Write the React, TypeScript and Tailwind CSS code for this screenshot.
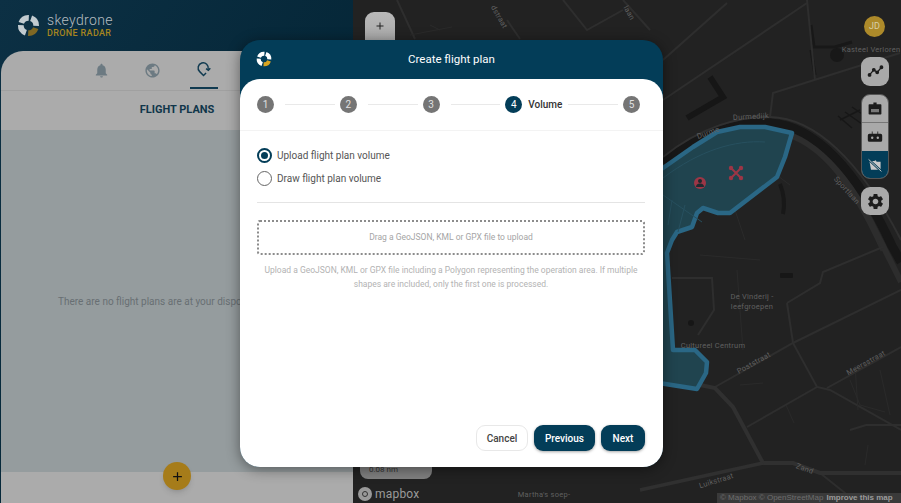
import { Fragment } from 'react';
import { MdNotifications, MdPublic, MdSettings, MdAdd } from 'react-icons/md';

const thinRoads = [
  '663,100 807,3',
  '663,60 727,3',
  '807,0 815,80',
  '770,117 773,93 900,53',
  '397,0 415,39',
  '507,20 520,39',
  '563,0 587,30 623,10',
  '623,0 650,30',
  '715,387 793,343 901,290',
  '787,303 793,343 817,387 830,390 901,430',
  '787,303 820,283 823,272 883,247',
  '747,427 817,387',
  '827,388 901,347',
  '820,473 850,497',
  '672,278 712,278 714,310 698,335',
  '850,430 866,425 901,425',
];

const faintRoads = [
  '737,270 743,350',
  '740,385 763,383',
  '786,405 794,423',
  '850,380 860,405 885,412',
  '855,365 858,410',
  '880,370 890,415',
  '868,445 865,465',
  '700,255 760,260',
  '730,195 745,240',
  '770,170 790,185',
  '440,30 430,25',
  '410,35 452,27',
];

const labels = [
  { x: 871, y: 52, t: 'Kasteel Verloren', r: 0 },
  { x: 751, y: 119, t: 'Durmedijk', r: -3 },
  { x: 709, y: 135, t: 'Durme', r: -20 },
  { x: 845, y: 192, t: 'Sportlaan', r: 48 },
  { x: 752, y: 299, t: 'De Vinderij -', r: 0 },
  { x: 752, y: 309, t: 'leefgroepen', r: 0 },
  { x: 713, y: 348, t: 'Cultureel Centrum', r: 0 },
  { x: 755, y: 365, t: 'Poststraat', r: -29 },
  { x: 867, y: 365, t: 'Meersstraat', r: -29 },
  { x: 804, y: 471, t: 'Zand', r: 20 },
  { x: 717, y: 483, t: 'Luikstraat', r: -17 },
  { x: 544, y: 497, t: "Martha's soep-", r: 0 },
  { x: 497, y: 18, t: 'dstraat', r: 60 },
  { x: 627, y: 14, t: 'laan', r: 60 },
];

function ShutterLogo({ className, accent }: { className: string; accent: string }) {
  return (
    <svg viewBox="0 0 24 24" className={className} fill="none" strokeWidth="6">
      <circle cx="12" cy="12" r="8" stroke="#fff" strokeDasharray="10 40.3" transform="rotate(-70 12 12)" />
      <circle cx="12" cy="12" r="8" stroke={accent} strokeDasharray="10 40.3" transform="rotate(20 12 12)" />
      <circle cx="12" cy="12" r="8" stroke="#fff" strokeDasharray="10 40.3" transform="rotate(110 12 12)" />
      <circle cx="12" cy="12" r="8" stroke="#fff" strokeDasharray="10 40.3" transform="rotate(-160 12 12)" />
    </svg>
  );
}

function MapLayer() {
  return (
    <svg viewBox="353 0 548 503" className="absolute inset-0 h-full w-full">
      {/* water */}
      <path d="M663,172 C700,140 740,128 770,130 C815,134 850,175 884,250" fill="none" stroke="#2d2d2d" strokeWidth="7" />
      <path d="M663,163 C700,133 740,121 770,123 C815,126 857,170 892,246 L901,262" fill="none" stroke="#171717" strokeWidth="9" />
      <path d="M663,157 C700,127 740,116 770,117 C815,118 860,160 901,240" fill="none" stroke="#303030" strokeWidth="2" />
      <path d="M880,240 L901,282" fill="none" stroke="#2d2d2d" strokeWidth="6" />
      <path d="M710,77 L723,97 L687,118" fill="none" stroke="#161616" strokeWidth="6" />
      <path d="M811,25 L814,47 L835,47 L852,42 M815,75 L811,50" fill="none" stroke="#181818" strokeWidth="3" />
      <circle cx="837" cy="55" r="7" fill="#181818" />
      <circle cx="691" cy="323" r="3" fill="#161616" />
      <rect x="780" y="273" width="13" height="5" rx="1" fill="#171717" />
      <path d="M780,184 q6,15 3,30" fill="none" stroke="#181818" strokeWidth="4" />
      <path d="M840,120 L860,110 M838,116 L852,128 M845,112 L862,124 M852,107 L875,123" fill="none" stroke="#171717" strokeWidth="1.5" />

      {thinRoads.map((p) => (
        <polyline key={p} points={p} fill="none" stroke="#2e2e2e" strokeWidth="2" />
      ))}
      {faintRoads.map((p) => (
        <polyline key={p} points={p} fill="none" stroke="#2a2a2a" strokeWidth="1" />
      ))}
      <path d="M700,385 L715,388 L733,407 L763,463 L793,463 L820,473 L901,473" fill="none" stroke="#303030" strokeWidth="4" />
      <path d="M640,490 L763,463" fill="none" stroke="#303030" strokeWidth="3.5" />

      {/* operation volume */}
      <path
        d="M640,180 L663,168 L693,147 L717,132 L740,127 L765,127 L792,133 L785,157 L777,177 L730,213 L718,213 L703,208 L697,213 L692,227 L677,232 L672,240 L667,253 L673,350 L695,350 L707,362 L706,373 L697,389 L640,380 Z"
        fill="#20444f"
        stroke="#2a6785"
        strokeWidth="4.5"
        strokeLinejoin="round"
      />
      <path d="M663,178 C700,150 735,140 765,142 M663,195 L702,222 M672,200 L668,225 M685,205 L678,232" fill="none" stroke="#27505f" strokeWidth="1" />

      {/* pilot and drone markers */}
      <circle cx="700" cy="183" r="6" fill="#9c3646" />
      <circle cx="700" cy="181" r="2" fill="#1e2a30" />
      <path d="M696,187 a4,3.5 0 0 1 8,0Z" fill="#1e2a30" />
      <path d="M731,168 L741,178 M741,168 L731,178" stroke="#9c3646" strokeWidth="2" />
      <circle cx="731" cy="168" r="2.2" fill="#9c3646" />
      <circle cx="741" cy="168" r="2.2" fill="#9c3646" />
      <circle cx="731" cy="178" r="2.2" fill="#9c3646" />
      <circle cx="741" cy="178" r="2.2" fill="#9c3646" />

      {labels.map((l) => (
        <text
          key={l.t}
          x={l.x}
          y={l.y}
          transform={`rotate(${l.r} ${l.x} ${l.y})`}
          textAnchor="middle"
          fontSize="7.5"
          letterSpacing="0.25"
          fill="#606060"
          fontFamily="Roboto, sans-serif"
        >
          {l.t}
        </text>
      ))}
    </svg>
  );
}

function MapControls() {
  return (
    <>
      <div className="absolute left-[12px] top-[12px] flex h-[36px] w-[30px] items-start justify-center rounded-t-[9px] bg-gradient-to-b from-[#b9b9b9] to-[#a5a5a5] pt-[8px] text-[#222]">
        <MdAdd size={12} />
      </div>
      <div className="absolute left-[7px] top-[455px] h-[24px] w-[72px] rounded-[8px] bg-[#808080] pl-[9px] pt-[9px] text-[8px] text-[#333]">
        0.08 nm
      </div>
      <div className="absolute bottom-[1px] left-[5px] flex items-center gap-[3px]">
        <span className="flex h-[14px] w-[14px] items-center justify-center rounded-full bg-[#9a9a9a]">
          <span className="h-[6px] w-[6px] rounded-full border-[1.5px] border-[#333]" />
        </span>
        <span className="text-[12px] leading-[16px] tracking-[0.2px] text-[#9a9a9a]">mapbox</span>
      </div>
      <div className="absolute bottom-0 right-0 flex h-[10px] w-[184px] items-center gap-[3px] bg-[#3a3a3a] pl-[3px] text-[8px] leading-[10px] text-[#6d6d6d] font-['Liberation_Sans',sans-serif]">
        <span>© Mapbox © OpenStreetMap</span>
        <span className="font-bold text-[#9a9a9a]">Improve this map</span>
      </div>

      <div className="absolute right-[16px] top-[16px] flex h-[21px] w-[21px] items-center justify-center rounded-full bg-[#ad8a2a] text-[9px] text-[#d8cfa8]">
        JD
      </div>
      <div className="absolute left-[508px] top-[57px] flex w-[28px] flex-col gap-[8px]">
        <button className="flex h-[29px] items-center justify-center rounded-[9px] bg-[#a9a9a9]">
          <svg viewBox="0 0 20 20" className="h-[17px] w-[17px]" fill="none" stroke="#1c1c1c" strokeWidth="1.5">
            <polyline points="3,14 8,8 12,11 17,5" />
            <circle cx="3" cy="14" r="1.5" fill="#1c1c1c" />
            <circle cx="8" cy="8" r="1.5" fill="#1c1c1c" />
            <circle cx="12" cy="11" r="1.5" fill="#1c1c1c" />
            <circle cx="17" cy="5" r="1.5" fill="#1c1c1c" />
          </svg>
        </button>
        <div className="flex h-[85px] flex-col overflow-hidden rounded-[9px] border border-[#555] bg-[#a9a9a9]">
          <div className="flex h-[28px] items-center justify-center border-b border-[#777]">
            <svg viewBox="0 0 20 20" className="h-[16px] w-[16px]" fill="#1c1c1c">
              <path d="M8 2h4v2h5a1 1 0 0 1 1 1v11a1 1 0 0 1-1 1H3a1 1 0 0 1-1-1V5a1 1 0 0 1 1-1h5Z" />
              <path d="M5 10h10v4H5Z" fill="#777" />
            </svg>
          </div>
          <div className="flex h-[28px] items-center justify-center">
            <svg viewBox="0 0 20 20" className="h-[16px] w-[16px]" fill="#1c1c1c">
              <path d="M6 3h1v3h6V3h1v3h3a2 2 0 0 1 2 2v6a2 2 0 0 1-2 2H3a2 2 0 0 1-2-2V8a2 2 0 0 1 2-2h3Z" />
              <circle cx="6.5" cy="11" r="1.5" fill="#a9a9a9" />
              <circle cx="13.5" cy="11" r="1.5" fill="#a9a9a9" />
            </svg>
          </div>
          <div className="flex flex-1 items-center justify-center bg-[#033d58]">
            <svg viewBox="0 0 20 20" className="h-[16px] w-[16px]">
              <path d="M3 5l6 0 2-1 1 2h5v10H5Z" fill="#c9c9c9" />
              <path d="M2 3L18 18" stroke="#033d58" strokeWidth="3" />
              <path d="M2 3L18 18" stroke="#c9c9c9" strokeWidth="1.2" />
            </svg>
          </div>
        </div>
        <button className="flex h-[28px] items-center justify-center rounded-[9px] bg-[#a9a9a9] text-[#1c1c1c]">
          <MdSettings size={19} />
        </button>
      </div>
    </>
  );
}

function Sidebar() {
  return (
    <aside className="flex h-full w-[353px] shrink-0 flex-col bg-gradient-to-br from-[#0c3044] to-[#02202f]">
      <div className="flex h-[51px] shrink-0 items-center gap-[7px] pl-[17px]">
        <ShutterLogo className="h-[23px] w-[23px] opacity-75" accent="#a67c1a" />
        <div className="flex flex-col">
          <span className="text-[14px] font-light leading-[15px] tracking-[0.35px] text-[#b5bcc0]">skeydrone</span>
          <span className="text-[9px] font-medium leading-[11px] tracking-[0.35px] text-[#a6851f]">DRONE RADAR</span>
        </div>
      </div>
      <div className="ml-px flex flex-1 flex-col overflow-hidden rounded-t-[22px] bg-[#ababab]">
        <div className="flex h-[40px] shrink-0 border-b border-[#a0a0a0] pl-[75px]">
          <div className="flex w-[51px] items-center justify-center text-[#6c7a82]">
            <MdNotifications size={17} />
          </div>
          <div className="flex w-[51px] items-center justify-center text-[#6c7a82]">
            <MdPublic size={17} />
          </div>
          <div className="flex w-[51px] justify-center">
            <div className="flex h-[38px] w-[28px] items-center justify-center border-b-2 border-[#103a50] text-[#103a50]">
              <svg viewBox="0 0 20 20" className="h-[17px] w-[17px]" fill="none" stroke="currentColor" strokeWidth="1.7">
                <path d="M15.5 9.5A6 6 0 1 0 5.5 12.5L10 17l3-3" />
                <path d="M13 9l2.7 2L18 8.5" />
              </svg>
            </div>
          </div>
        </div>
        <h2 className="flex h-[39px] shrink-0 items-center justify-center text-[11px] font-bold text-[#10364a]">
          FLIGHT PLANS
        </h2>
        <div className="flex h-[342px] shrink-0 items-center bg-[#959c9e] pl-[57px] text-[10px] text-[#686f73]">
          There are no flight plans are at your disposal
        </div>
        <div className="relative flex-1">
          <button className="absolute left-[162px] top-[-10px] flex h-[28px] w-[28px] items-center justify-center rounded-full bg-[#a67c1a] text-[#111] shadow-md">
            <MdAdd size={15} />
          </button>
        </div>
      </div>
    </aside>
  );
}

function Stepper() {
  return (
    <div className="flex h-[52px] shrink-0 items-center border-b border-[#f3f3f3] pl-[17px] pr-[23px]">
      {[1, 2, 3, 4, 5].map((n) => (
        <Fragment key={n}>
          <span
            className={
              n === 4
                ? 'flex h-[17px] w-[17px] shrink-0 items-center justify-center rounded-full bg-[#033d58] text-[10px] text-white'
                : 'flex h-[17px] w-[17px] shrink-0 items-center justify-center rounded-full bg-[#757575] text-[10px] text-[#e0e0e0]'
            }
          >
            {n}
          </span>
          {n === 4 && <span className="ml-[6px] w-[34px] shrink-0 text-[10px] font-medium text-[#333]">Volume</span>}
          {n !== 5 && <span className={n === 4 ? 'ml-[6px] mr-[5px] h-px flex-1 bg-[#e9e9e9]' : 'ml-[11px] mr-[5px] h-px flex-1 bg-[#e9e9e9]'} />}
        </Fragment>
      ))}
    </div>
  );
}

function Radio({ label, checked }: { label: string; checked?: boolean }) {
  return (
    <label className="flex h-[15px] items-center gap-[5px] text-[10px] text-[#555]">
      <span
        className={
          checked
            ? 'flex h-[15px] w-[15px] items-center justify-center rounded-full border-2 border-[#033d58]'
            : 'flex h-[15px] w-[15px] items-center justify-center rounded-full border-[1.5px] border-[#666]'
        }
      >
        {checked && <span className="h-[7px] w-[7px] rounded-full bg-[#033d58]" />}
      </span>
      {label}
    </label>
  );
}

function Dialog() {
  return (
    <div className="absolute left-[240px] top-[40px] flex h-[427px] w-[423px] flex-col rounded-[20px] bg-[#033d58] shadow-[0_2px_14px_rgba(0,0,0,0.45)]">
      <div className="relative flex h-[39px] shrink-0 items-center justify-center text-[11.5px] text-white">
        <ShutterLogo className="absolute left-[16px] top-[11px] h-[16px] w-[16px]" accent="#d9a520" />
        Create flight plan
      </div>
      <div className="flex flex-1 flex-col rounded-[20px] bg-white">
        <Stepper />
        <div className="flex flex-1 flex-col pl-[17px] pr-[18px] pt-[17px]">
          <div className="flex flex-col gap-[8px]">
            <Radio label="Upload flight plan volume" checked />
            <Radio label="Draw flight plan volume" />
          </div>
          <div className="mt-[16px] h-px bg-[#e4e4e4]" />
          <div className="mt-[17px] flex h-[35px] items-center justify-center rounded-[3px] border-2 border-dotted border-[#8c8c8c] text-[8.5px] text-[#a5a5a5]">
            Drag a GeoJSON, KML or GPX file to upload
          </div>
          <p className="mt-[8px] px-[6px] text-center text-[8.5px] leading-[14px] text-[#b3b3b3]">
            Upload a GeoJSON, KML or GPX file including a Polygon representing the operation area. If multiple shapes are included, only the first one is processed.
          </p>
          <div className="mt-auto mb-[16px] flex justify-end gap-[6px] text-[10px] font-medium">
            <button className="h-[26px] w-[52px] rounded-[9px] border border-[#e8e8e8] bg-white text-[#444]">Cancel</button>
            <button className="h-[26px] w-[61px] rounded-[9px] bg-[#033d58] text-white shadow-[0_1px_3px_rgba(0,0,0,0.35)]">Previous</button>
            <button className="h-[26px] w-[44px] rounded-[9px] bg-[#033d58] text-white shadow-[0_1px_3px_rgba(0,0,0,0.35)]">Next</button>
          </div>
        </div>
      </div>
    </div>
  );
}

export default function App() {
  return (
    <div className="relative flex h-[503px] w-[901px] overflow-hidden font-['Roboto','Liberation_Sans',sans-serif]">
      <Sidebar />
      <main className="relative flex-1 bg-[#222222]">
        <MapLayer />
        <MapControls />
      </main>
      <Dialog />
    </div>
  );
}
